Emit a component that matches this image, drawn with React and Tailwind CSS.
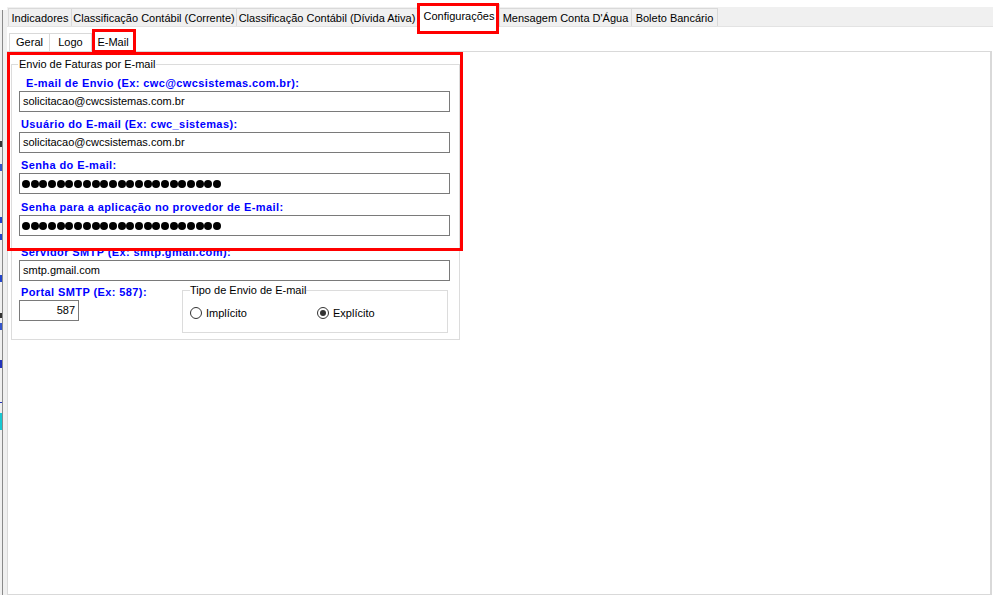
import React from 'react';

const font = { fontFamily: '"Liberation Sans", Arial, sans-serif' };

const topTabs = [
  { label: 'Indicadores', w: 'w-[64px]', first: true },
  { label: 'Classificação Contábil (Corrente)', w: 'w-[165px]' },
  { label: 'Classificação Contábil (Dívida Ativa)', w: 'w-[181px]' },
  { label: 'Configurações', w: 'w-[82px]', active: true },
  { label: "Mensagem Conta D'Água", w: 'w-[132px]' },
  { label: 'Boleto Bancário', w: 'w-[86px]' },
];

const subTabs = [
  { label: 'Geral', w: 'w-[41px]', first: true },
  { label: 'Logo', w: 'w-[42px]' },
  { label: 'E-Mail', w: 'w-[42px]', active: true },
];

// bits of the window that sits behind this one, seen at the left edge
const behind = [
  { mt: 'mt-[131px]', h: 'h-[6px]', c: 'bg-[#333333]' },
  { mt: 'mt-[17px]', h: 'h-[7px]', c: 'bg-[#3355cc]' },
  { mt: 'mt-[46px]', h: 'h-[6px]', c: 'bg-[#2244cc]' },
  { mt: 'mt-[11px]', h: 'h-[6px]', c: 'bg-[#2244cc]' },
  { mt: 'mt-[35px]', h: 'h-[7px]', c: 'bg-[#2244cc]' },
  { mt: 'mt-[31px]', h: 'h-[5px]', c: 'bg-[#333333]' },
  { mt: 'mt-[5px]', h: 'h-[7px]', c: 'bg-[#3355cc]' },
  { mt: 'mt-[30px]', h: 'h-[8px]', c: 'bg-[#2233bb]' },
  { mt: 'mt-[34px]', h: 'h-px', c: 'bg-[#2233bb]' },
  { mt: 'mt-[10px]', h: 'h-[17px]', c: 'bg-[#16c8d2]' },
];

const Label = ({ children, className = '' }) => (
  <div className={`h-[16px] leading-[17px] text-[11px] font-bold tracking-[0.4px] text-[#0000ff] whitespace-nowrap ${className}`}>
    {children}
  </div>
);

const TextBox = ({ value, className = 'w-[431px]', right = false }) => (
  <div
    className={`h-[21px] border border-[#7a7a7a] bg-white flex items-center px-[3px] text-[11px] text-black ${right ? 'justify-end' : ''} ${className}`}
  >
    {value}
  </div>
);

const Dots = () => (
  <div className="h-[21px] w-[431px] border border-[#7a7a7a] bg-white flex items-center pl-[2px] gap-[0.7px]">
    {Array.from({ length: 23 }).map((_, i) => (
      <span key={i} className="w-[8px] h-[8px] rounded-full bg-black flex-none" />
    ))}
  </div>
);

const Radio = ({ checked, label, className = '' }) => (
  <div className={`flex items-center h-[14px] ${className}`}>
    <span className="w-[12px] h-[12px] rounded-full border border-[#333333] bg-white flex items-center justify-center flex-none">
      {checked && <span className="w-[6px] h-[6px] rounded-full bg-[#333333]" />}
    </span>
    <span className="ml-[4px] text-[11px] text-black">{label}</span>
  </div>
);

export default function App() {
  return (
    <div className="w-[993px] h-[595px] bg-white flex overflow-hidden text-black relative" style={font}>
      {/* fragment of the window behind */}
      <div className="w-[7px] flex-none mt-[10px] bg-[#f0f0f0] flex">
        <div className="w-[2px] flex flex-col">
          {behind.map((b, i) => (
            <span key={i} className={`${b.mt} ${b.h} ${b.c} w-[2px] flex-none`} />
          ))}
        </div>
        <div className="w-px bg-[#8a8a8a]" />
      </div>

      <div className="flex-1 flex flex-col">
        {/* main tabs */}
        <div className="mt-[7px] h-[20px] flex-none bg-[#f0f0f0] border-b border-[#e3e3e3] flex items-end pl-[1px]">
          {topTabs.map((t) =>
            t.active ? (
              <div
                key={t.label}
                className={`${t.w} h-[23px] -mb-px pt-px bg-white border border-b-0 border-[#d9d9d9] flex items-center justify-center text-[11px] relative z-10`}
              >
                {t.label}
              </div>
            ) : (
              <div
                key={t.label}
                className={`${t.w} h-[18px] pt-[2px] bg-[#f0f0f0] border-t border-r border-[#d9d9d9] ${t.first ? 'border-l' : ''} flex items-center justify-center text-[11px] whitespace-nowrap`}
              >
                {t.label}
              </div>
            )
          )}
        </div>

        {/* sub tabs */}
        <div className="h-[24px] flex-none flex items-end pl-[2px]">
          {subTabs.map((t) =>
            t.active ? (
              <div
                key={t.label}
                className={`${t.w} h-[21px] -mb-px bg-white border border-b-0 border-[#d9d9d9] flex items-center justify-center text-[11px] relative z-10`}
              >
                {t.label}
              </div>
            ) : (
              <div
                key={t.label}
                className={`${t.w} h-[18px] bg-white border-t border-r border-[#d9d9d9] ${t.first ? 'border-l' : ''} flex items-center justify-center text-[11px]`}
              >
                {t.label}
              </div>
            )
          )}
        </div>

        {/* tab page */}
        <div className="flex-1 mr-[1px] border border-r-2 border-[#d9d9d9] pl-[3px] pt-[6px]">
          <fieldset className="w-[449px] border border-[#dcdcdc] px-[7px] pb-[6px]">
            <legend className="-ml-[1px] px-[1px] h-[13px] leading-[13px] text-[11px]">Envio de Faturas por E-mail</legend>

            <Label className="mt-[4px] pl-[7px]">E-mail de Envio (Ex: cwc@cwcsistemas.com.br):</Label>
            <TextBox value="solicitacao@cwcsistemas.com.br" />

            <Label className="mt-[4px] pl-[2px]">Usuário do E-mail (Ex: cwc_sistemas):</Label>
            <TextBox value="solicitacao@cwcsistemas.com.br" />

            <Label className="mt-[4px] pl-[2px]">Senha do E-mail:</Label>
            <Dots />

            <Label className="mt-[5px] pl-[2px]">Senha para a aplicação no provedor de E-mail:</Label>
            <Dots />

            <Label className="mt-[8px] pl-[2px]">Servidor SMTP (Ex: smtp.gmail.com):</Label>
            <TextBox value="smtp.gmail.com" />

            <div className="mt-[3px] flex">
              <div className="w-[163px] flex-none">
                <Label className="pl-[2px]">Portal SMTP (Ex: 587):</Label>
                <TextBox value="587" className="w-[60px]" right />
              </div>
              <fieldset className="w-[266px] h-[49px] border border-[#dcdcdc] px-[7px]">
                <legend className="px-0 h-[13px] leading-[13px] text-[11px]">Tipo de Envio de E-mail</legend>
                <div className="mt-[9px] flex">
                  <Radio label="Implícito" className="w-[127px]" />
                  <Radio label="Explícito" checked />
                </div>
              </fieldset>
            </div>
          </fieldset>
        </div>
      </div>

      {/* annotation boxes drawn over the screenshot */}
      <div className="absolute left-[417px] top-[3px] w-[82px] h-[31px] border-[3px] border-[#ff0000] z-20" />
      <div className="absolute left-[92px] top-[29px] w-[44px] h-[24px] border-[3px] border-[#ff0000] z-20" />
      <div className="absolute left-[7px] top-[52px] w-[456px] h-[199px] border-[3px] border-[#ff0000] z-20" />
    </div>
  );
}
